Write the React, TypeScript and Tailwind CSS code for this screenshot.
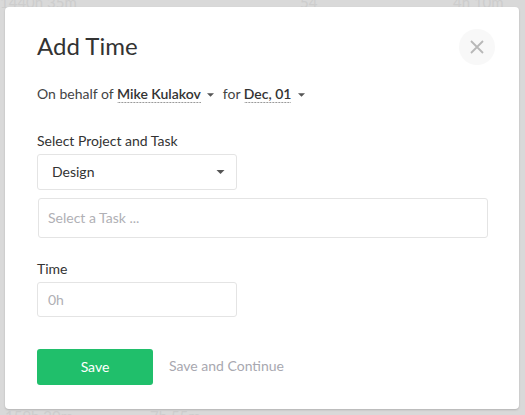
import { useState } from "react"

function Caret({ className = "" }: { className?: string }) {
  return (
    <svg viewBox="0 0 8 4" className={className} fill="currentColor" aria-hidden>
      <path d="M0 0h8L4 4z" />
    </svg>
  )
}

function DashedPick({ children }: { children: React.ReactNode }) {
  return (
    <span className="inline-block bg-[linear-gradient(to_right,#9a9a9a_66%,transparent_0)] bg-[length:3px_1px] bg-bottom bg-repeat-x pb-px font-semibold leading-[17px] text-[#333]">
      {children}
    </span>
  )
}

export default function App() {
  const [project] = useState("Design")

  return (
    <div
      className="relative h-[415px] w-[525px] overflow-hidden bg-[#d9d9d9] pt-[7px] pl-[5px]"
      style={{ fontFamily: "Lato, 'Noto Sans', sans-serif" }}
    >
      {/* page content behind the overlay */}
      <span className="absolute -top-[9px] left-0 text-[15px] text-[#cdcdcd]">1440h 35m</span>
      <span className="absolute -top-[9px] left-[300px] text-[15px] text-[#cdcdcd]">54</span>
      <span className="absolute -top-[9px] left-[453px] text-[15px] text-[#cdcdcd]">4h 10m</span>
      <span className="absolute top-[405px] left-[5px] text-[15px] text-[#cdcdcd]">159h 20m</span>
      <span className="absolute top-[405px] left-[150px] text-[15px] text-[#cdcdcd]">7h 55m</span>

      <div className="relative flex h-[402px] w-[514px] flex-col rounded-[4px] bg-white pt-[22px] pr-[24px] pb-[23px] pl-[32px] shadow-[0_1px_2px_rgba(0,0,0,0.18)]">
        <div className="flex items-start justify-between">
          <h1 className="pt-px text-[24px] leading-[32px] text-[#333]">Add Time</h1>
          <button
            type="button"
            aria-label="Close"
            className="flex size-9 items-center justify-center rounded-full bg-[#f8f8f8] text-[#b8b8b8]"
          >
            <svg viewBox="0 0 14 14" className="size-[14px]" stroke="currentColor" strokeWidth="1.8" fill="none">
              <path d="M1 1l12 12M13 1L1 13" />
            </svg>
          </button>
        </div>

        <div className="mt-[18px] text-[14px] leading-[22px] text-[#444]">
          On behalf of <DashedPick>Mike Kulakov</DashedPick>
          <Caret className="ml-[6px] mr-[9px] inline-block h-[4px] w-[7px] align-middle text-[#555]" />
          for <DashedPick>Dec, 01</DashedPick>
          <Caret className="ml-[7px] inline-block h-[4px] w-[7px] align-middle text-[#555]" />
        </div>

        <label className="mt-[26px] text-[14px] leading-[20px] text-[#333]">Select Project and Task</label>
        <div className="mt-[3px] flex h-9 w-[200px] items-center justify-between rounded-[3px] border border-[#e4e4e4] pr-[11px] pl-[14px]">
          <span className="text-[14px] leading-[20px] text-[#333]">{project}</span>
          <Caret className="h-[4px] w-[9px] text-[#555]" />
        </div>
        <div className="mt-2 ml-px flex h-10 w-[450px] items-center rounded-[3px] border border-[#e4e4e4] px-[9px]">
          <span className="text-[14px] leading-[20px] text-[#b0b0b5]">Select a Task ...</span>
        </div>

        <label className="mt-[21px] text-[14px] leading-[20px] text-[#333]">Time</label>
        <div className="mt-[3px] flex h-[35px] w-[200px] items-center rounded-[3px] border border-[#e4e4e4] px-[10px]">
          <span className="text-[14px] leading-[20px] text-[#b0b0b5]">0h</span>
        </div>

        <div className="mt-[32px] flex items-center gap-4">
          <button
            type="button"
            className="h-9 w-[116px] rounded-[3px] bg-[#20bf6b] pb-[2px] text-[14px] text-white"
          >
            Save
          </button>
          <button type="button" className="pb-[4px] text-[14px] text-[#a8a8b0]">
            Save and Continue
          </button>
        </div>
      </div>
    </div>
  )
}
